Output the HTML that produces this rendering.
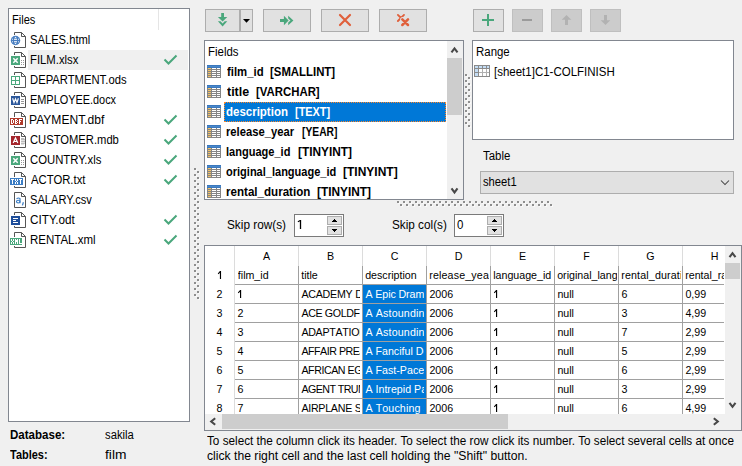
<!DOCTYPE html><html><head><meta charset="utf-8"><title>Import</title><style>

html,body{margin:0;padding:0}
html{overflow:hidden;background:#f0f0f0}
body{width:742px;height:466px;overflow:hidden;background:#f0f0f0;font-family:"Liberation Sans", sans-serif;font-size:12px;color:#000;position:relative}
.a{position:absolute;box-sizing:content-box}
.t{position:absolute;white-space:pre;line-height:1;transform-origin:0 0}
.g{font-size:10.67px}
.k{font-kerning:none}
svg{display:block}

</style></head><body>
<div class="a" style="left:8px;top:8px;width:180px;height:412px;background:#fff;border:1px solid #828790;"></div>
<div class="a" style="left:158px;top:9px;width:1px;height:21px;background:#e5e5e5;"></div>
<span id="t0" class="t" style="left:11.98px;top:13.84px;font-size:12px;transform:scaleX(0.9215);">Files</span>
<div class="a" style="left:28px;top:50px;width:160px;height:20px;background:#f0f0f0;"></div>
<svg class="a" style="left:11px;top:32px;overflow:visible;" width="16" height="16" viewBox="0 0 16 16"><path d="M3.5 3V.5H10.5L14.5 4.5V15.5H3.5V14" fill="none" stroke="#555"/><path d="M10.5 .5V4.5H14.5" fill="none" stroke="#555"/><circle cx="4.5" cy="8.5" r="4.7" fill="#477dc0"/><rect x="3.8" y="4.9" width="1.40" height="1.00" fill="#fff"/><rect x="1.2" y="6.7" width="0.80" height="1.10" fill="#fff"/><rect x="3.0" y="6.7" width="3.00" height="1.10" fill="#fff"/><rect x="7.0" y="6.7" width="0.80" height="1.10" fill="#fff"/><rect x="1.2" y="9.2" width="0.80" height="1.10" fill="#fff"/><rect x="3.0" y="9.2" width="3.00" height="1.10" fill="#fff"/><rect x="7.0" y="9.2" width="0.80" height="1.10" fill="#fff"/><rect x="3.8" y="11.1" width="1.40" height="1.00" fill="#fff"/></svg>
<span id="t1" class="t" style="left:30.03px;top:33.84px;font-size:12px;transform:scaleX(0.9325);">SALES.html</span>
<svg class="a" style="left:11px;top:52px;overflow:visible;" width="16" height="16" viewBox="0 0 16 16"><path d="M3.5 3V.5H10.5L14.5 4.5V15.5H3.5V14" fill="none" stroke="#555"/><path d="M10.5 .5V4.5H14.5" fill="none" stroke="#555"/><rect x="0" y="4" width="9" height="9" fill="#4aa77c"/><path d="M2.3 6.3L6.7 10.7M6.7 6.3L2.3 10.7" stroke="#fff" stroke-width="1.5"/><path d="M10 8h1M12 8h1M10 10h1M12 10h1M10 12h1M12 12h1" stroke="#999" stroke-width="1" transform="translate(0,.5)"/></svg>
<span id="t2" class="t" style="left:29.56px;top:53.84px;font-size:12px;transform:scaleX(0.9433);">FILM.xlsx</span>
<svg class="a" style="left:160px;top:50px;" width="24" height="20" viewBox="0 0 24 20"><path d="M4.5 9.5L8.5 13.5L16.5 5.5" fill="none" stroke="#4aa77c" stroke-width="2"/></svg>
<svg class="a" style="left:11px;top:72px;overflow:visible;" width="16" height="16" viewBox="0 0 16 16"><path d="M3.5 3V.5H10.5L14.5 4.5V15.5H3.5V14" fill="none" stroke="#555"/><path d="M10.5 .5V4.5H14.5" fill="none" stroke="#555"/><rect x=".5" y="4.5" width="8" height="8" fill="#fff" stroke="#4aa77c"/><path d="M4.5 4.5V12.5M.5 8.5H8.5" stroke="#4aa77c"/></svg>
<span id="t3" class="t" style="left:29.56px;top:73.84px;font-size:12px;transform:scaleX(0.9379);">DEPARTMENT.ods</span>
<svg class="a" style="left:11px;top:92px;overflow:visible;" width="16" height="16" viewBox="0 0 16 16"><path d="M3.5 3V.5H10.5L14.5 4.5V15.5H3.5V14" fill="none" stroke="#555"/><path d="M10.5 .5V4.5H14.5" fill="none" stroke="#555"/><rect x="0" y="4" width="9" height="9" fill="#2b579a"/><path d="M1.6 6.3L3 10.6L4.5 6.8L6 10.6L7.4 6.3" fill="none" stroke="#fff" stroke-width="1.2"/><path d="M10 7.5h3M10 9.5h3M10 11.5h3" stroke="#999"/></svg>
<span id="t4" class="t" style="left:29.59px;top:93.84px;font-size:12px;transform:scaleX(0.9089);">EMPLOYEE.docx</span>
<svg class="a" style="left:11px;top:112px;overflow:visible;" width="16" height="16" viewBox="0 0 16 16"><path d="M3.5 5V.5H10.5L14.5 4.5V15.5H3.5V14" fill="none" stroke="#555"/><path d="M10.5 .5V4.5H14.5" fill="none" stroke="#555"/><g shape-rendering="crispEdges"><rect x="-1" y="6" width="13" height="7" fill="#b03a2a"/><rect x="0" y="7" width="1" height="1" fill="#fff"/><rect x="1" y="7" width="1" height="1" fill="#fff"/><rect x="0" y="8" width="1" height="1" fill="#fff"/><rect x="2" y="8" width="1" height="1" fill="#fff"/><rect x="0" y="9" width="1" height="1" fill="#fff"/><rect x="2" y="9" width="1" height="1" fill="#fff"/><rect x="0" y="10" width="1" height="1" fill="#fff"/><rect x="2" y="10" width="1" height="1" fill="#fff"/><rect x="0" y="11" width="1" height="1" fill="#fff"/><rect x="1" y="11" width="1" height="1" fill="#fff"/><rect x="4" y="7" width="1" height="1" fill="#fff"/><rect x="5" y="7" width="1" height="1" fill="#fff"/><rect x="4" y="8" width="1" height="1" fill="#fff"/><rect x="6" y="8" width="1" height="1" fill="#fff"/><rect x="4" y="9" width="1" height="1" fill="#fff"/><rect x="5" y="9" width="1" height="1" fill="#fff"/><rect x="4" y="10" width="1" height="1" fill="#fff"/><rect x="6" y="10" width="1" height="1" fill="#fff"/><rect x="4" y="11" width="1" height="1" fill="#fff"/><rect x="5" y="11" width="1" height="1" fill="#fff"/><rect x="8" y="7" width="1" height="1" fill="#fff"/><rect x="9" y="7" width="1" height="1" fill="#fff"/><rect x="10" y="7" width="1" height="1" fill="#fff"/><rect x="8" y="8" width="1" height="1" fill="#fff"/><rect x="8" y="9" width="1" height="1" fill="#fff"/><rect x="9" y="9" width="1" height="1" fill="#fff"/><rect x="8" y="10" width="1" height="1" fill="#fff"/><rect x="8" y="11" width="1" height="1" fill="#fff"/></g></svg>
<span id="t5" class="t" style="left:29.49px;top:113.84px;font-size:12px;transform:scaleX(1.0054);">PAYMENT.dbf</span>
<svg class="a" style="left:160px;top:110px;" width="24" height="20" viewBox="0 0 24 20"><path d="M4.5 9.5L8.5 13.5L16.5 5.5" fill="none" stroke="#4aa77c" stroke-width="2"/></svg>
<svg class="a" style="left:11px;top:132px;overflow:visible;" width="16" height="16" viewBox="0 0 16 16"><path d="M3.5 3V.5H10.5L14.5 4.5V15.5H3.5V14" fill="none" stroke="#555"/><path d="M10.5 .5V4.5H14.5" fill="none" stroke="#555"/><rect x="0" y="4" width="9" height="9" fill="#a4262c"/><path d="M2.2 11L4.5 6L6.8 11M3 9.5H6" fill="none" stroke="#fff" stroke-width="1.2"/><path d="M10 6h2.5q1.5 .5 1.5 1.5v3q0 1.5 -1.5 2h-2.5z" fill="#bbb"/><path d="M10 8.5h4M10 10.5h4" stroke="#fff" stroke-width=".6"/></svg>
<span id="t6" class="t" style="left:29.92px;top:133.84px;font-size:12px;transform:scaleX(0.9340);">CUSTOMER.mdb</span>
<svg class="a" style="left:160px;top:130px;" width="24" height="20" viewBox="0 0 24 20"><path d="M4.5 9.5L8.5 13.5L16.5 5.5" fill="none" stroke="#4aa77c" stroke-width="2"/></svg>
<svg class="a" style="left:11px;top:152px;overflow:visible;" width="16" height="16" viewBox="0 0 16 16"><path d="M3.5 3V.5H10.5L14.5 4.5V15.5H3.5V14" fill="none" stroke="#555"/><path d="M10.5 .5V4.5H14.5" fill="none" stroke="#555"/><rect x="0" y="4" width="9" height="9" fill="#4aa77c"/><path d="M2.3 6.3L6.7 10.7M6.7 6.3L2.3 10.7" stroke="#fff" stroke-width="1.5"/><path d="M10 8h1M12 8h1M10 10h1M12 10h1M10 12h1M12 12h1" stroke="#999" stroke-width="1" transform="translate(0,.5)"/></svg>
<span id="t7" class="t" style="left:29.91px;top:153.84px;font-size:12px;transform:scaleX(0.9436);">COUNTRY.xls</span>
<svg class="a" style="left:160px;top:150px;" width="24" height="20" viewBox="0 0 24 20"><path d="M4.5 9.5L8.5 13.5L16.5 5.5" fill="none" stroke="#4aa77c" stroke-width="2"/></svg>
<svg class="a" style="left:11px;top:172px;overflow:visible;" width="16" height="16" viewBox="0 0 16 16"><path d="M3.5 5V.5H10.5L14.5 4.5V15.5H3.5V14" fill="none" stroke="#555"/><path d="M10.5 .5V4.5H14.5" fill="none" stroke="#555"/><g shape-rendering="crispEdges"><rect x="-1" y="6" width="13" height="7" fill="#3b7dc4"/><rect x="0" y="7" width="1" height="1" fill="#fff"/><rect x="1" y="7" width="1" height="1" fill="#fff"/><rect x="2" y="7" width="1" height="1" fill="#fff"/><rect x="1" y="8" width="1" height="1" fill="#fff"/><rect x="1" y="9" width="1" height="1" fill="#fff"/><rect x="1" y="10" width="1" height="1" fill="#fff"/><rect x="1" y="11" width="1" height="1" fill="#fff"/><rect x="4" y="7" width="1" height="1" fill="#fff"/><rect x="6" y="7" width="1" height="1" fill="#fff"/><rect x="4" y="8" width="1" height="1" fill="#fff"/><rect x="6" y="8" width="1" height="1" fill="#fff"/><rect x="5" y="9" width="1" height="1" fill="#fff"/><rect x="4" y="10" width="1" height="1" fill="#fff"/><rect x="6" y="10" width="1" height="1" fill="#fff"/><rect x="4" y="11" width="1" height="1" fill="#fff"/><rect x="6" y="11" width="1" height="1" fill="#fff"/><rect x="8" y="7" width="1" height="1" fill="#fff"/><rect x="9" y="7" width="1" height="1" fill="#fff"/><rect x="10" y="7" width="1" height="1" fill="#fff"/><rect x="9" y="8" width="1" height="1" fill="#fff"/><rect x="9" y="9" width="1" height="1" fill="#fff"/><rect x="9" y="10" width="1" height="1" fill="#fff"/><rect x="9" y="11" width="1" height="1" fill="#fff"/></g></svg>
<span id="t8" class="t" style="left:30.50px;top:173.84px;font-size:12px;transform:scaleX(0.9420);">ACTOR.txt</span>
<svg class="a" style="left:160px;top:170px;" width="24" height="20" viewBox="0 0 24 20"><path d="M4.5 9.5L8.5 13.5L16.5 5.5" fill="none" stroke="#4aa77c" stroke-width="2"/></svg>
<svg class="a" style="left:11px;top:192px;overflow:visible;" width="16" height="16" viewBox="0 0 16 16"><path d="M3.5 .5H10.5L14.5 4.5V15.5H3.5Z" fill="#fff" stroke="#555"/><path d="M10.5 .5V4.5H14.5" fill="none" stroke="#555"/><path d="M5.5 6.9Q7.4 5.3 9.0 6.6V11.2" fill="none" stroke="#3b7dc4" stroke-width="1.15"/><ellipse cx="7.2" cy="9.6" rx="1.75" ry="1.35" fill="none" stroke="#3b7dc4" stroke-width="1.1"/><path d="M12.4 10.2L11.4 13.4" fill="none" stroke="#3b7dc4" stroke-width="1.25"/></svg>
<span id="t9" class="t" style="left:30.04px;top:193.84px;font-size:12px;transform:scaleX(0.9250);">SALARY.csv</span>
<svg class="a" style="left:11px;top:212px;overflow:visible;" width="16" height="16" viewBox="0 0 16 16"><path d="M3.5 3V.5H10.5L14.5 4.5V15.5H3.5V14" fill="none" stroke="#555"/><path d="M10.5 .5V4.5H14.5" fill="none" stroke="#555"/><rect x="0" y="4" width="9" height="9" fill="#1f4e9a"/><path d="M2 6.5H7M2 8.5H5M2 10.5H7" stroke="#fff"/></svg>
<span id="t10" class="t" style="left:29.89px;top:213.84px;font-size:12px;transform:scaleX(0.9773);">CITY.odt</span>
<svg class="a" style="left:160px;top:210px;" width="24" height="20" viewBox="0 0 24 20"><path d="M4.5 9.5L8.5 13.5L16.5 5.5" fill="none" stroke="#4aa77c" stroke-width="2"/></svg>
<svg class="a" style="left:11px;top:232px;overflow:visible;" width="16" height="16" viewBox="0 0 16 16"><path d="M3.5 5V.5H10.5L14.5 4.5V15.5H3.5V14" fill="none" stroke="#555"/><path d="M10.5 .5V4.5H14.5" fill="none" stroke="#555"/><g shape-rendering="crispEdges"><rect x="-1" y="6" width="12" height="7" fill="#4aa77c"/><rect x="0" y="7" width="1" height="1" fill="#fff"/><rect x="2" y="7" width="1" height="1" fill="#fff"/><rect x="0" y="8" width="1" height="1" fill="#fff"/><rect x="2" y="8" width="1" height="1" fill="#fff"/><rect x="1" y="9" width="1" height="1" fill="#fff"/><rect x="0" y="10" width="1" height="1" fill="#fff"/><rect x="2" y="10" width="1" height="1" fill="#fff"/><rect x="0" y="11" width="1" height="1" fill="#fff"/><rect x="2" y="11" width="1" height="1" fill="#fff"/><rect x="4" y="7" width="1" height="1" fill="#fff"/><rect x="6" y="7" width="1" height="1" fill="#fff"/><rect x="4" y="8" width="1" height="1" fill="#fff"/><rect x="5" y="8" width="1" height="1" fill="#fff"/><rect x="6" y="8" width="1" height="1" fill="#fff"/><rect x="4" y="9" width="1" height="1" fill="#fff"/><rect x="5" y="9" width="1" height="1" fill="#fff"/><rect x="6" y="9" width="1" height="1" fill="#fff"/><rect x="4" y="10" width="1" height="1" fill="#fff"/><rect x="6" y="10" width="1" height="1" fill="#fff"/><rect x="4" y="11" width="1" height="1" fill="#fff"/><rect x="6" y="11" width="1" height="1" fill="#fff"/><rect x="8" y="7" width="1" height="1" fill="#fff"/><rect x="8" y="8" width="1" height="1" fill="#fff"/><rect x="8" y="9" width="1" height="1" fill="#fff"/><rect x="8" y="10" width="1" height="1" fill="#fff"/><rect x="8" y="11" width="1" height="1" fill="#fff"/><rect x="9" y="11" width="1" height="1" fill="#fff"/><rect x="10" y="11" width="1" height="1" fill="#fff"/></g></svg>
<span id="t11" class="t" style="left:29.54px;top:233.84px;font-size:12px;transform:scaleX(0.9576);">RENTAL.xml</span>
<svg class="a" style="left:160px;top:230px;" width="24" height="20" viewBox="0 0 24 20"><path d="M4.5 9.5L8.5 13.5L16.5 5.5" fill="none" stroke="#4aa77c" stroke-width="2"/></svg>
<span id="t12" class="t" style="left:9.88px;top:428.84px;font-size:12px;font-weight:bold;transform:scaleX(0.9622);">Database:</span>
<span id="t13" class="t" style="left:104.95px;top:428.84px;font-size:12px;transform:scaleX(0.9383);">sakila</span>
<span id="t14" class="t" style="left:10.49px;top:448.84px;font-size:12px;font-weight:bold;transform:scaleX(0.9129);">Tables:</span>
<span id="t15" class="t" style="left:105.16px;top:448.84px;font-size:12px;transform:scaleX(1.1493);">film</span>
<div class="a" style="left:205px;top:9px;width:33px;height:21px;background:#e1e1e1;border:1px solid #adadad;"></div>
<div class="a" style="left:240px;top:9px;width:11px;height:21px;background:#e1e1e1;border:1px solid #adadad;"></div>
<div class="a" style="left:263px;top:9px;width:46px;height:21px;background:#e1e1e1;border:1px solid #adadad;"></div>
<svg class="a" style="left:0;top:0" width="742" height="40" viewBox="0 0 742 40"><path d="M221.20 13.00L224.00 13.00L224.00 16.90L227.30 16.90L222.60 21.60L217.90 16.90L221.20 16.90Z" fill="#4aa77c"/><path d="M217.90 21.20L222.60 26.40L227.30 21.20L224.70 21.20L222.60 23.50L220.50 21.20Z" fill="#4aa77c"/><path d="M280.00 19.10L280.00 21.90L283.90 21.90L283.90 25.20L288.60 20.50L283.90 15.80L283.90 19.10Z" fill="#4aa77c"/><path d="M288.20 15.80L293.40 20.50L288.20 25.20L288.20 22.60L290.50 20.50L288.20 18.40Z" fill="#4aa77c"/></svg>
<svg class="a" style="left:243px;top:19px;" width="7" height="4" viewBox="0 0 7 4"><path d="M0 0H7L3.5 3.8Z" fill="#000"/></svg>
<div class="a" style="left:321px;top:9px;width:46px;height:21px;background:#e1e1e1;border:1px solid #adadad;"></div>
<svg class="a" style="left:338px;top:13px;" width="14" height="14" viewBox="0 0 14 14"><path d="M2 2L12 12M12 2L2 12" stroke="#e0603c" stroke-width="2.2" stroke-linecap="round"/></svg>
<div class="a" style="left:379px;top:9px;width:46px;height:21px;background:#e1e1e1;border:1px solid #adadad;"></div>
<svg class="a" style="left:396px;top:13px;" width="14" height="14" viewBox="0 0 14 14"><path d="M1.9 1.9L8 8M8 1.9L1.9 8" stroke="#e0603c" stroke-width="1.9" stroke-linecap="round"/><path d="M6.3 6.3L12 12M12 6.3L6.3 12" stroke="#e1e1e1" stroke-width="4.2" stroke-linecap="round"/><path d="M6.3 6.3L12 12M12 6.3L6.3 12" stroke="#e0603c" stroke-width="2.5" stroke-linecap="round"/></svg>
<div class="a" style="left:473px;top:9px;width:29px;height:21px;background:#e1e1e1;border:1px solid #adadad;"></div>
<svg class="a" style="left:482px;top:14px;" width="12" height="12" viewBox="0 0 12 12" shape-rendering="crispEdges"><path d="M0 6H12M6 0V12" stroke="#4aa77c" stroke-width="2"/></svg>
<div class="a" style="left:512px;top:9px;width:29px;height:21px;background:#cccccc;border:1px solid #bfbfbf;"></div>
<div class="a" style="left:522px;top:19px;width:10px;height:2px;background:#9b9b9b;"></div>
<div class="a" style="left:551px;top:9px;width:29px;height:21px;background:#cccccc;border:1px solid #bfbfbf;"></div>
<svg class="a" style="left:561px;top:14px;" width="12" height="12" viewBox="0 0 12 12"><path d="M5.5 1L10.3 5.8H7V11H4V5.8H.7Z" fill="#b2b2b2"/></svg>
<div class="a" style="left:590px;top:9px;width:29px;height:21px;background:#cccccc;border:1px solid #bfbfbf;"></div>
<svg class="a" style="left:600px;top:14px;" width="12" height="12" viewBox="0 0 12 12"><path d="M5.5 11L10.3 6.2H7V1H4V6.2H.7Z" fill="#b2b2b2"/></svg>
<div class="a" style="left:204px;top:40px;width:258px;height:158px;background:#fff;border:1px solid #828790;overflow:hidden"></div>
<span id="t16" class="t" style="left:207.65px;top:45.84px;font-size:12px;transform:scaleX(0.9535);">Fields</span>
<div class="a" style="left:205px;top:41px;width:258px;height:158px;overflow:hidden">
</div>
<svg class="a" style="left:207px;top:65px;" width="14" height="13" viewBox="0 0 14 13" shape-rendering="crispEdges"><rect x="0" y="0" width="14" height="13" fill="#858585"/><rect x="0" y="0" width="14" height="3" fill="#3b78bd"/><rect x="0" y="1" width="14" height="1" fill="#4a86c8"/><rect x="1" y="3" width="3" height="1" fill="#f5c264"/><rect x="5" y="3" width="4" height="1" fill="#fff"/><rect x="10" y="3" width="3" height="1" fill="#fff"/><rect x="1" y="5" width="3" height="1" fill="#f5c264"/><rect x="5" y="5" width="4" height="1" fill="#fff"/><rect x="10" y="5" width="3" height="1" fill="#fff"/><rect x="1" y="7" width="3" height="1" fill="#f5c264"/><rect x="5" y="7" width="4" height="1" fill="#fff"/><rect x="10" y="7" width="3" height="1" fill="#fff"/><rect x="1" y="9" width="3" height="1" fill="#f5c264"/><rect x="5" y="9" width="4" height="1" fill="#fff"/><rect x="10" y="9" width="3" height="1" fill="#fff"/><rect x="1" y="11" width="3" height="1" fill="#f5c264"/><rect x="5" y="11" width="4" height="1" fill="#fff"/><rect x="10" y="11" width="3" height="1" fill="#fff"/></svg>
<span id="t17" class="t" style="left:226.78px;top:65.84px;font-size:12px;font-weight:bold;transform:scaleX(0.9457);">film_id</span>
<span id="t18" class="t" style="left:269.61px;top:65.84px;font-size:12px;font-weight:bold;transform:scaleX(0.9484);">[SMALLINT]</span>
<svg class="a" style="left:207px;top:85px;" width="14" height="13" viewBox="0 0 14 13" shape-rendering="crispEdges"><rect x="0" y="0" width="14" height="13" fill="#858585"/><rect x="0" y="0" width="14" height="3" fill="#3b78bd"/><rect x="0" y="1" width="14" height="1" fill="#4a86c8"/><rect x="1" y="3" width="3" height="1" fill="#f5c264"/><rect x="5" y="3" width="4" height="1" fill="#fff"/><rect x="10" y="3" width="3" height="1" fill="#fff"/><rect x="1" y="5" width="3" height="1" fill="#f5c264"/><rect x="5" y="5" width="4" height="1" fill="#fff"/><rect x="10" y="5" width="3" height="1" fill="#fff"/><rect x="1" y="7" width="3" height="1" fill="#f5c264"/><rect x="5" y="7" width="4" height="1" fill="#fff"/><rect x="10" y="7" width="3" height="1" fill="#fff"/><rect x="1" y="9" width="3" height="1" fill="#f5c264"/><rect x="5" y="9" width="4" height="1" fill="#fff"/><rect x="10" y="9" width="3" height="1" fill="#fff"/><rect x="1" y="11" width="3" height="1" fill="#f5c264"/><rect x="5" y="11" width="4" height="1" fill="#fff"/><rect x="10" y="11" width="3" height="1" fill="#fff"/></svg>
<span id="t19" class="t" style="left:226.77px;top:85.84px;font-size:12px;font-weight:bold;transform:scaleX(1.0395);">title</span>
<span id="t20" class="t" style="left:255.61px;top:85.84px;font-size:12px;font-weight:bold;transform:scaleX(0.9488);">[VARCHAR]</span>
<div class="a" style="left:224px;top:102px;width:220px;height:18px;background:#0078d7;border:1px dotted #ff8728"></div>
<svg class="a" style="left:207px;top:105px;" width="14" height="13" viewBox="0 0 14 13" shape-rendering="crispEdges"><rect x="0" y="0" width="14" height="13" fill="#858585"/><rect x="0" y="0" width="14" height="3" fill="#3b78bd"/><rect x="0" y="1" width="14" height="1" fill="#4a86c8"/><rect x="1" y="3" width="3" height="1" fill="#f5c264"/><rect x="5" y="3" width="4" height="1" fill="#fff"/><rect x="10" y="3" width="3" height="1" fill="#fff"/><rect x="1" y="5" width="3" height="1" fill="#f5c264"/><rect x="5" y="5" width="4" height="1" fill="#fff"/><rect x="10" y="5" width="3" height="1" fill="#fff"/><rect x="1" y="7" width="3" height="1" fill="#f5c264"/><rect x="5" y="7" width="4" height="1" fill="#fff"/><rect x="10" y="7" width="3" height="1" fill="#fff"/><rect x="1" y="9" width="3" height="1" fill="#f5c264"/><rect x="5" y="9" width="4" height="1" fill="#fff"/><rect x="10" y="9" width="3" height="1" fill="#fff"/><rect x="1" y="11" width="3" height="1" fill="#f5c264"/><rect x="5" y="11" width="4" height="1" fill="#fff"/><rect x="10" y="11" width="3" height="1" fill="#fff"/></svg>
<span id="t21" class="t" style="left:226.42px;top:105.84px;font-size:12px;font-weight:bold;color:#fff;transform:scaleX(0.9575);">description</span>
<span id="t22" class="t" style="left:294.63px;top:105.84px;font-size:12px;font-weight:bold;color:#fff;transform:scaleX(0.9097);">[TEXT]</span>
<svg class="a" style="left:207px;top:125px;" width="14" height="13" viewBox="0 0 14 13" shape-rendering="crispEdges"><rect x="0" y="0" width="14" height="13" fill="#858585"/><rect x="0" y="0" width="14" height="3" fill="#3b78bd"/><rect x="0" y="1" width="14" height="1" fill="#4a86c8"/><rect x="1" y="3" width="3" height="1" fill="#f5c264"/><rect x="5" y="3" width="4" height="1" fill="#fff"/><rect x="10" y="3" width="3" height="1" fill="#fff"/><rect x="1" y="5" width="3" height="1" fill="#f5c264"/><rect x="5" y="5" width="4" height="1" fill="#fff"/><rect x="10" y="5" width="3" height="1" fill="#fff"/><rect x="1" y="7" width="3" height="1" fill="#f5c264"/><rect x="5" y="7" width="4" height="1" fill="#fff"/><rect x="10" y="7" width="3" height="1" fill="#fff"/><rect x="1" y="9" width="3" height="1" fill="#f5c264"/><rect x="5" y="9" width="4" height="1" fill="#fff"/><rect x="10" y="9" width="3" height="1" fill="#fff"/><rect x="1" y="11" width="3" height="1" fill="#f5c264"/><rect x="5" y="11" width="4" height="1" fill="#fff"/><rect x="10" y="11" width="3" height="1" fill="#fff"/></svg>
<span id="t23" class="t" style="left:226.20px;top:125.84px;font-size:12px;font-weight:bold;transform:scaleX(0.9350);">release_year</span>
<span id="t24" class="t" style="left:301.56px;top:125.84px;font-size:12px;font-weight:bold;transform:scaleX(0.8573);">[YEAR]</span>
<svg class="a" style="left:207px;top:145px;" width="14" height="13" viewBox="0 0 14 13" shape-rendering="crispEdges"><rect x="0" y="0" width="14" height="13" fill="#858585"/><rect x="0" y="0" width="14" height="3" fill="#3b78bd"/><rect x="0" y="1" width="14" height="1" fill="#4a86c8"/><rect x="1" y="3" width="3" height="1" fill="#f5c264"/><rect x="5" y="3" width="4" height="1" fill="#fff"/><rect x="10" y="3" width="3" height="1" fill="#fff"/><rect x="1" y="5" width="3" height="1" fill="#f5c264"/><rect x="5" y="5" width="4" height="1" fill="#fff"/><rect x="10" y="5" width="3" height="1" fill="#fff"/><rect x="1" y="7" width="3" height="1" fill="#f5c264"/><rect x="5" y="7" width="4" height="1" fill="#fff"/><rect x="10" y="7" width="3" height="1" fill="#fff"/><rect x="1" y="9" width="3" height="1" fill="#f5c264"/><rect x="5" y="9" width="4" height="1" fill="#fff"/><rect x="10" y="9" width="3" height="1" fill="#fff"/><rect x="1" y="11" width="3" height="1" fill="#f5c264"/><rect x="5" y="11" width="4" height="1" fill="#fff"/><rect x="10" y="11" width="3" height="1" fill="#fff"/></svg>
<span id="t25" class="t" style="left:226.21px;top:145.84px;font-size:12px;font-weight:bold;transform:scaleX(0.9197);">language_id</span>
<span id="t26" class="t" style="left:297.78px;top:145.84px;font-size:12px;font-weight:bold;transform:scaleX(0.9874);">[TINYINT]</span>
<svg class="a" style="left:207px;top:165px;" width="14" height="13" viewBox="0 0 14 13" shape-rendering="crispEdges"><rect x="0" y="0" width="14" height="13" fill="#858585"/><rect x="0" y="0" width="14" height="3" fill="#3b78bd"/><rect x="0" y="1" width="14" height="1" fill="#4a86c8"/><rect x="1" y="3" width="3" height="1" fill="#f5c264"/><rect x="5" y="3" width="4" height="1" fill="#fff"/><rect x="10" y="3" width="3" height="1" fill="#fff"/><rect x="1" y="5" width="3" height="1" fill="#f5c264"/><rect x="5" y="5" width="4" height="1" fill="#fff"/><rect x="10" y="5" width="3" height="1" fill="#fff"/><rect x="1" y="7" width="3" height="1" fill="#f5c264"/><rect x="5" y="7" width="4" height="1" fill="#fff"/><rect x="10" y="7" width="3" height="1" fill="#fff"/><rect x="1" y="9" width="3" height="1" fill="#f5c264"/><rect x="5" y="9" width="4" height="1" fill="#fff"/><rect x="10" y="9" width="3" height="1" fill="#fff"/><rect x="1" y="11" width="3" height="1" fill="#f5c264"/><rect x="5" y="11" width="4" height="1" fill="#fff"/><rect x="10" y="11" width="3" height="1" fill="#fff"/></svg>
<span id="t27" class="t" style="left:226.44px;top:165.84px;font-size:12px;font-weight:bold;transform:scaleX(0.9187);">original_language_id</span>
<span id="t28" class="t" style="left:343.17px;top:165.84px;font-size:12px;font-weight:bold;transform:scaleX(1.0005);">[TINYINT]</span>
<svg class="a" style="left:207px;top:185px;" width="14" height="13" viewBox="0 0 14 13" shape-rendering="crispEdges"><rect x="0" y="0" width="14" height="13" fill="#858585"/><rect x="0" y="0" width="14" height="3" fill="#3b78bd"/><rect x="0" y="1" width="14" height="1" fill="#4a86c8"/><rect x="1" y="3" width="3" height="1" fill="#f5c264"/><rect x="5" y="3" width="4" height="1" fill="#fff"/><rect x="10" y="3" width="3" height="1" fill="#fff"/><rect x="1" y="5" width="3" height="1" fill="#f5c264"/><rect x="5" y="5" width="4" height="1" fill="#fff"/><rect x="10" y="5" width="3" height="1" fill="#fff"/><rect x="1" y="7" width="3" height="1" fill="#f5c264"/><rect x="5" y="7" width="4" height="1" fill="#fff"/><rect x="10" y="7" width="3" height="1" fill="#fff"/><rect x="1" y="9" width="3" height="1" fill="#f5c264"/><rect x="5" y="9" width="4" height="1" fill="#fff"/><rect x="10" y="9" width="3" height="1" fill="#fff"/><rect x="1" y="11" width="3" height="1" fill="#f5c264"/><rect x="5" y="11" width="4" height="1" fill="#fff"/><rect x="10" y="11" width="3" height="1" fill="#fff"/></svg>
<span id="t29" class="t" style="left:226.18px;top:185.84px;font-size:12px;font-weight:bold;transform:scaleX(0.9654);">rental_duration</span>
<span id="t30" class="t" style="left:317.18px;top:185.84px;font-size:12px;font-weight:bold;transform:scaleX(0.9874);">[TINYINT]</span>
<div class="a" style="left:205px;top:199px;width:258px;height:1px;"></div>
<div class="a" style="left:447px;top:41px;width:16px;height:158px;background:#f0f0f0;"></div>
<div class="a" style="left:447px;top:58px;width:15px;height:57px;background:#cdcdcd;"></div>
<svg class="a" style="left:0;top:0" width="742" height="466"><path d="M451.50 52.40L454.50 48.40L457.50 52.40" fill="none" stroke="#484848" stroke-width="2.1" stroke-linejoin="miter"/></svg>
<svg class="a" style="left:0;top:0" width="742" height="466"><path d="M451.50 188.40L454.50 192.40L457.50 188.40" fill="none" stroke="#484848" stroke-width="2.1" stroke-linejoin="miter"/></svg>
<svg class="a" style="left:0;top:0" width="742" height="466" shape-rendering="crispEdges"><rect x="466" y="75" width="2" height="2" fill="#fafafa"/><rect x="469" y="78" width="2" height="2" fill="#fafafa"/><rect x="466" y="81" width="2" height="2" fill="#fafafa"/><rect x="469" y="84" width="2" height="2" fill="#fafafa"/><rect x="466" y="87" width="2" height="2" fill="#fafafa"/><rect x="469" y="90" width="2" height="2" fill="#fafafa"/><rect x="466" y="93" width="2" height="2" fill="#fafafa"/><rect x="469" y="96" width="2" height="2" fill="#fafafa"/><rect x="466" y="99" width="2" height="2" fill="#fafafa"/><rect x="469" y="102" width="2" height="2" fill="#fafafa"/><rect x="466" y="105" width="2" height="2" fill="#fafafa"/><rect x="469" y="108" width="2" height="2" fill="#fafafa"/><rect x="466" y="111" width="2" height="2" fill="#fafafa"/><rect x="469" y="114" width="2" height="2" fill="#fafafa"/><rect x="466" y="117" width="2" height="2" fill="#fafafa"/><rect x="469" y="120" width="2" height="2" fill="#fafafa"/><rect x="466" y="123" width="2" height="2" fill="#fafafa"/><rect x="469" y="126" width="2" height="2" fill="#fafafa"/><rect x="195" y="169" width="2" height="2" fill="#fafafa"/><rect x="198" y="172" width="2" height="2" fill="#fafafa"/><rect x="195" y="175" width="2" height="2" fill="#fafafa"/><rect x="198" y="178" width="2" height="2" fill="#fafafa"/><rect x="195" y="181" width="2" height="2" fill="#fafafa"/><rect x="198" y="184" width="2" height="2" fill="#fafafa"/><rect x="195" y="187" width="2" height="2" fill="#fafafa"/><rect x="198" y="190" width="2" height="2" fill="#fafafa"/><rect x="195" y="193" width="2" height="2" fill="#fafafa"/><rect x="198" y="196" width="2" height="2" fill="#fafafa"/><rect x="195" y="199" width="2" height="2" fill="#fafafa"/><rect x="198" y="202" width="2" height="2" fill="#fafafa"/><rect x="195" y="205" width="2" height="2" fill="#fafafa"/><rect x="198" y="208" width="2" height="2" fill="#fafafa"/><rect x="195" y="211" width="2" height="2" fill="#fafafa"/><rect x="198" y="214" width="2" height="2" fill="#fafafa"/><rect x="195" y="217" width="2" height="2" fill="#fafafa"/><rect x="198" y="220" width="2" height="2" fill="#fafafa"/><rect x="195" y="223" width="2" height="2" fill="#fafafa"/><rect x="198" y="226" width="2" height="2" fill="#fafafa"/><rect x="195" y="229" width="2" height="2" fill="#fafafa"/><rect x="198" y="232" width="2" height="2" fill="#fafafa"/><rect x="195" y="235" width="2" height="2" fill="#fafafa"/><rect x="198" y="238" width="2" height="2" fill="#fafafa"/><rect x="195" y="241" width="2" height="2" fill="#fafafa"/><rect x="198" y="244" width="2" height="2" fill="#fafafa"/><rect x="195" y="247" width="2" height="2" fill="#fafafa"/><rect x="198" y="250" width="2" height="2" fill="#fafafa"/><rect x="195" y="253" width="2" height="2" fill="#fafafa"/><rect x="198" y="256" width="2" height="2" fill="#fafafa"/><rect x="195" y="259" width="2" height="2" fill="#fafafa"/><rect x="198" y="262" width="2" height="2" fill="#fafafa"/><rect x="195" y="265" width="2" height="2" fill="#fafafa"/><rect x="198" y="268" width="2" height="2" fill="#fafafa"/><rect x="195" y="271" width="2" height="2" fill="#fafafa"/><rect x="198" y="274" width="2" height="2" fill="#fafafa"/><rect x="195" y="277" width="2" height="2" fill="#fafafa"/><rect x="198" y="280" width="2" height="2" fill="#fafafa"/><rect x="195" y="283" width="2" height="2" fill="#fafafa"/><rect x="198" y="286" width="2" height="2" fill="#fafafa"/><rect x="195" y="289" width="2" height="2" fill="#fafafa"/><rect x="198" y="292" width="2" height="2" fill="#fafafa"/><rect x="195" y="295" width="2" height="2" fill="#fafafa"/><rect x="198" y="298" width="2" height="2" fill="#fafafa"/><rect x="398" y="202" width="2" height="2" fill="#fafafa"/><rect x="401" y="205" width="2" height="2" fill="#fafafa"/><rect x="404" y="202" width="2" height="2" fill="#fafafa"/><rect x="407" y="205" width="2" height="2" fill="#fafafa"/><rect x="410" y="202" width="2" height="2" fill="#fafafa"/><rect x="413" y="205" width="2" height="2" fill="#fafafa"/><rect x="416" y="202" width="2" height="2" fill="#fafafa"/><rect x="419" y="205" width="2" height="2" fill="#fafafa"/><rect x="422" y="202" width="2" height="2" fill="#fafafa"/><rect x="425" y="205" width="2" height="2" fill="#fafafa"/><rect x="428" y="202" width="2" height="2" fill="#fafafa"/><rect x="431" y="205" width="2" height="2" fill="#fafafa"/><rect x="434" y="202" width="2" height="2" fill="#fafafa"/><rect x="437" y="205" width="2" height="2" fill="#fafafa"/><rect x="440" y="202" width="2" height="2" fill="#fafafa"/><rect x="443" y="205" width="2" height="2" fill="#fafafa"/><rect x="446" y="202" width="2" height="2" fill="#fafafa"/><rect x="449" y="205" width="2" height="2" fill="#fafafa"/><rect x="452" y="202" width="2" height="2" fill="#fafafa"/><rect x="455" y="205" width="2" height="2" fill="#fafafa"/><rect x="458" y="202" width="2" height="2" fill="#fafafa"/><rect x="461" y="205" width="2" height="2" fill="#fafafa"/><rect x="464" y="202" width="2" height="2" fill="#fafafa"/><rect x="467" y="205" width="2" height="2" fill="#fafafa"/><rect x="470" y="202" width="2" height="2" fill="#fafafa"/><rect x="473" y="205" width="2" height="2" fill="#fafafa"/><rect x="476" y="202" width="2" height="2" fill="#fafafa"/><rect x="479" y="205" width="2" height="2" fill="#fafafa"/><rect x="482" y="202" width="2" height="2" fill="#fafafa"/><rect x="485" y="205" width="2" height="2" fill="#fafafa"/><rect x="488" y="202" width="2" height="2" fill="#fafafa"/><rect x="491" y="205" width="2" height="2" fill="#fafafa"/><rect x="494" y="202" width="2" height="2" fill="#fafafa"/><rect x="497" y="205" width="2" height="2" fill="#fafafa"/><rect x="500" y="202" width="2" height="2" fill="#fafafa"/><rect x="503" y="205" width="2" height="2" fill="#fafafa"/><rect x="506" y="202" width="2" height="2" fill="#fafafa"/><rect x="509" y="205" width="2" height="2" fill="#fafafa"/><rect x="512" y="202" width="2" height="2" fill="#fafafa"/><rect x="515" y="205" width="2" height="2" fill="#fafafa"/><rect x="518" y="202" width="2" height="2" fill="#fafafa"/><rect x="521" y="205" width="2" height="2" fill="#fafafa"/><rect x="524" y="202" width="2" height="2" fill="#fafafa"/><rect x="527" y="205" width="2" height="2" fill="#fafafa"/><rect x="530" y="202" width="2" height="2" fill="#fafafa"/><rect x="533" y="205" width="2" height="2" fill="#fafafa"/><rect x="536" y="202" width="2" height="2" fill="#fafafa"/><rect x="539" y="205" width="2" height="2" fill="#fafafa"/><rect x="542" y="202" width="2" height="2" fill="#fafafa"/><rect x="545" y="205" width="2" height="2" fill="#fafafa"/><rect x="548" y="202" width="2" height="2" fill="#fafafa"/><rect x="551" y="205" width="2" height="2" fill="#fafafa"/><rect x="465" y="74" width="2" height="2" fill="#8e8e8e"/><rect x="468" y="77" width="2" height="2" fill="#8e8e8e"/><rect x="465" y="80" width="2" height="2" fill="#8e8e8e"/><rect x="468" y="83" width="2" height="2" fill="#8e8e8e"/><rect x="465" y="86" width="2" height="2" fill="#8e8e8e"/><rect x="468" y="89" width="2" height="2" fill="#8e8e8e"/><rect x="465" y="92" width="2" height="2" fill="#8e8e8e"/><rect x="468" y="95" width="2" height="2" fill="#8e8e8e"/><rect x="465" y="98" width="2" height="2" fill="#8e8e8e"/><rect x="468" y="101" width="2" height="2" fill="#8e8e8e"/><rect x="465" y="104" width="2" height="2" fill="#8e8e8e"/><rect x="468" y="107" width="2" height="2" fill="#8e8e8e"/><rect x="465" y="110" width="2" height="2" fill="#8e8e8e"/><rect x="468" y="113" width="2" height="2" fill="#8e8e8e"/><rect x="465" y="116" width="2" height="2" fill="#8e8e8e"/><rect x="468" y="119" width="2" height="2" fill="#8e8e8e"/><rect x="465" y="122" width="2" height="2" fill="#8e8e8e"/><rect x="468" y="125" width="2" height="2" fill="#8e8e8e"/><rect x="194" y="168" width="2" height="2" fill="#8e8e8e"/><rect x="197" y="171" width="2" height="2" fill="#8e8e8e"/><rect x="194" y="174" width="2" height="2" fill="#8e8e8e"/><rect x="197" y="177" width="2" height="2" fill="#8e8e8e"/><rect x="194" y="180" width="2" height="2" fill="#8e8e8e"/><rect x="197" y="183" width="2" height="2" fill="#8e8e8e"/><rect x="194" y="186" width="2" height="2" fill="#8e8e8e"/><rect x="197" y="189" width="2" height="2" fill="#8e8e8e"/><rect x="194" y="192" width="2" height="2" fill="#8e8e8e"/><rect x="197" y="195" width="2" height="2" fill="#8e8e8e"/><rect x="194" y="198" width="2" height="2" fill="#8e8e8e"/><rect x="197" y="201" width="2" height="2" fill="#8e8e8e"/><rect x="194" y="204" width="2" height="2" fill="#8e8e8e"/><rect x="197" y="207" width="2" height="2" fill="#8e8e8e"/><rect x="194" y="210" width="2" height="2" fill="#8e8e8e"/><rect x="197" y="213" width="2" height="2" fill="#8e8e8e"/><rect x="194" y="216" width="2" height="2" fill="#8e8e8e"/><rect x="197" y="219" width="2" height="2" fill="#8e8e8e"/><rect x="194" y="222" width="2" height="2" fill="#8e8e8e"/><rect x="197" y="225" width="2" height="2" fill="#8e8e8e"/><rect x="194" y="228" width="2" height="2" fill="#8e8e8e"/><rect x="197" y="231" width="2" height="2" fill="#8e8e8e"/><rect x="194" y="234" width="2" height="2" fill="#8e8e8e"/><rect x="197" y="237" width="2" height="2" fill="#8e8e8e"/><rect x="194" y="240" width="2" height="2" fill="#8e8e8e"/><rect x="197" y="243" width="2" height="2" fill="#8e8e8e"/><rect x="194" y="246" width="2" height="2" fill="#8e8e8e"/><rect x="197" y="249" width="2" height="2" fill="#8e8e8e"/><rect x="194" y="252" width="2" height="2" fill="#8e8e8e"/><rect x="197" y="255" width="2" height="2" fill="#8e8e8e"/><rect x="194" y="258" width="2" height="2" fill="#8e8e8e"/><rect x="197" y="261" width="2" height="2" fill="#8e8e8e"/><rect x="194" y="264" width="2" height="2" fill="#8e8e8e"/><rect x="197" y="267" width="2" height="2" fill="#8e8e8e"/><rect x="194" y="270" width="2" height="2" fill="#8e8e8e"/><rect x="197" y="273" width="2" height="2" fill="#8e8e8e"/><rect x="194" y="276" width="2" height="2" fill="#8e8e8e"/><rect x="197" y="279" width="2" height="2" fill="#8e8e8e"/><rect x="194" y="282" width="2" height="2" fill="#8e8e8e"/><rect x="197" y="285" width="2" height="2" fill="#8e8e8e"/><rect x="194" y="288" width="2" height="2" fill="#8e8e8e"/><rect x="197" y="291" width="2" height="2" fill="#8e8e8e"/><rect x="194" y="294" width="2" height="2" fill="#8e8e8e"/><rect x="197" y="297" width="2" height="2" fill="#8e8e8e"/><rect x="397" y="201" width="2" height="2" fill="#8e8e8e"/><rect x="400" y="204" width="2" height="2" fill="#8e8e8e"/><rect x="403" y="201" width="2" height="2" fill="#8e8e8e"/><rect x="406" y="204" width="2" height="2" fill="#8e8e8e"/><rect x="409" y="201" width="2" height="2" fill="#8e8e8e"/><rect x="412" y="204" width="2" height="2" fill="#8e8e8e"/><rect x="415" y="201" width="2" height="2" fill="#8e8e8e"/><rect x="418" y="204" width="2" height="2" fill="#8e8e8e"/><rect x="421" y="201" width="2" height="2" fill="#8e8e8e"/><rect x="424" y="204" width="2" height="2" fill="#8e8e8e"/><rect x="427" y="201" width="2" height="2" fill="#8e8e8e"/><rect x="430" y="204" width="2" height="2" fill="#8e8e8e"/><rect x="433" y="201" width="2" height="2" fill="#8e8e8e"/><rect x="436" y="204" width="2" height="2" fill="#8e8e8e"/><rect x="439" y="201" width="2" height="2" fill="#8e8e8e"/><rect x="442" y="204" width="2" height="2" fill="#8e8e8e"/><rect x="445" y="201" width="2" height="2" fill="#8e8e8e"/><rect x="448" y="204" width="2" height="2" fill="#8e8e8e"/><rect x="451" y="201" width="2" height="2" fill="#8e8e8e"/><rect x="454" y="204" width="2" height="2" fill="#8e8e8e"/><rect x="457" y="201" width="2" height="2" fill="#8e8e8e"/><rect x="460" y="204" width="2" height="2" fill="#8e8e8e"/><rect x="463" y="201" width="2" height="2" fill="#8e8e8e"/><rect x="466" y="204" width="2" height="2" fill="#8e8e8e"/><rect x="469" y="201" width="2" height="2" fill="#8e8e8e"/><rect x="472" y="204" width="2" height="2" fill="#8e8e8e"/><rect x="475" y="201" width="2" height="2" fill="#8e8e8e"/><rect x="478" y="204" width="2" height="2" fill="#8e8e8e"/><rect x="481" y="201" width="2" height="2" fill="#8e8e8e"/><rect x="484" y="204" width="2" height="2" fill="#8e8e8e"/><rect x="487" y="201" width="2" height="2" fill="#8e8e8e"/><rect x="490" y="204" width="2" height="2" fill="#8e8e8e"/><rect x="493" y="201" width="2" height="2" fill="#8e8e8e"/><rect x="496" y="204" width="2" height="2" fill="#8e8e8e"/><rect x="499" y="201" width="2" height="2" fill="#8e8e8e"/><rect x="502" y="204" width="2" height="2" fill="#8e8e8e"/><rect x="505" y="201" width="2" height="2" fill="#8e8e8e"/><rect x="508" y="204" width="2" height="2" fill="#8e8e8e"/><rect x="511" y="201" width="2" height="2" fill="#8e8e8e"/><rect x="514" y="204" width="2" height="2" fill="#8e8e8e"/><rect x="517" y="201" width="2" height="2" fill="#8e8e8e"/><rect x="520" y="204" width="2" height="2" fill="#8e8e8e"/><rect x="523" y="201" width="2" height="2" fill="#8e8e8e"/><rect x="526" y="204" width="2" height="2" fill="#8e8e8e"/><rect x="529" y="201" width="2" height="2" fill="#8e8e8e"/><rect x="532" y="204" width="2" height="2" fill="#8e8e8e"/><rect x="535" y="201" width="2" height="2" fill="#8e8e8e"/><rect x="538" y="204" width="2" height="2" fill="#8e8e8e"/><rect x="541" y="201" width="2" height="2" fill="#8e8e8e"/><rect x="544" y="204" width="2" height="2" fill="#8e8e8e"/><rect x="547" y="201" width="2" height="2" fill="#8e8e8e"/><rect x="550" y="204" width="2" height="2" fill="#8e8e8e"/></svg>
<div class="a" style="left:472px;top:40px;width:260px;height:98px;background:#fff;border:1px solid #828790;"></div>
<span id="t31" class="t" style="left:475.55px;top:45.84px;font-size:12px;transform:scaleX(0.9535);">Range</span>
<svg class="a" style="left:474px;top:65px;" width="16" height="12" viewBox="0 0 16 12" shape-rendering="crispEdges"><rect x="0" y="0" width="16" height="12" fill="#8a8a8a"/><rect x="1" y="1" width="3" height="2" fill="#c3dcf4"/><rect x="1" y="4" width="3" height="3" fill="#c3dcf4"/><rect x="1" y="8" width="3" height="3" fill="#c3dcf4"/><rect x="5" y="1" width="3" height="2" fill="#c3dcf4"/><rect x="5" y="4" width="3" height="3" fill="#fff"/><rect x="5" y="8" width="3" height="3" fill="#fff"/><rect x="9" y="1" width="3" height="2" fill="#c3dcf4"/><rect x="9" y="4" width="3" height="3" fill="#fff"/><rect x="9" y="8" width="3" height="3" fill="#fff"/><rect x="13" y="1" width="2" height="2" fill="#c3dcf4"/><rect x="13" y="4" width="2" height="3" fill="#fff"/><rect x="13" y="8" width="2" height="3" fill="#fff"/><rect x="8" y="4" width="1" height="7" fill="#b0b0b0"/><rect x="12" y="4" width="1" height="7" fill="#b0b0b0"/><rect x="5" y="7" width="10" height="1" fill="#b0b0b0"/></svg>
<span id="t32" class="t" style="left:493.56px;top:65.84px;font-size:12px;transform:scaleX(0.9577);">[sheet1]C1-COLFINISH</span>
<span id="t33" class="t" style="left:482.56px;top:149.84px;font-size:12px;transform:scaleX(0.9507);">Table</span>
<div class="a" style="left:480px;top:171px;width:252px;height:21px;background:#e1e1e1;border:1px solid #adadad;"></div>
<span id="t34" class="t" style="left:482.85px;top:175.84px;font-size:12px;transform:scaleX(0.9338);">sheet1</span>
<svg class="a" style="left:719px;top:178px;" width="12" height="9" viewBox="0 0 12 9"><path d="M2 2.5L6 6.5L10 2.5" fill="none" stroke="#404040" stroke-width="1.05"/></svg>
<span id="t35" class="t" style="left:227.41px;top:218.84px;font-size:12px;transform:scaleX(0.9838);">Skip row(s)</span>
<div class="a" style="left:294px;top:214px;width:48px;height:21px;background:#fff;border:1px solid #7a7a7a;"></div>
<svg class="a" style="left:0;top:0" width="742" height="466"><rect x="299.85" y="220" width="1.3" height="9" fill="#000"/><path d="M297.9 221.7L300.3 220.5" stroke="#000" stroke-width="1.15" fill="none"/></svg>
<div class="a" style="left:327px;top:216px;width:13px;height:7px;background:#e1e1e1;border:1px solid #adadad;"></div>
<div class="a" style="left:327px;top:226px;width:13px;height:7px;background:#e1e1e1;border:1px solid #adadad;"></div>
<svg class="a" style="left:332px;top:219px;" width="5" height="3" viewBox="0 0 5 3" shape-rendering="crispEdges"><path d="M2 0h1v1h-1zM1 1h3v1h-3zM0 2h5v1h-5z" fill="#000"/></svg>
<svg class="a" style="left:332px;top:229px;" width="5" height="3" viewBox="0 0 5 3" shape-rendering="crispEdges"><path d="M0 0h5v1h-5zM1 1h3v1h-3zM2 2h1v1h-1z" fill="#000"/></svg>
<span id="t36" class="t" style="left:391.71px;top:218.84px;font-size:12px;transform:scaleX(0.9790);">Skip col(s)</span>
<div class="a" style="left:454px;top:214px;width:48px;height:21px;background:#fff;border:1px solid #7a7a7a;"></div>
<span id="t37" class="t" style="left:456.92px;top:218.84px;font-size:12px;transform:scaleX(0.9565);">0</span>
<div class="a" style="left:487px;top:216px;width:13px;height:7px;background:#e1e1e1;border:1px solid #adadad;"></div>
<div class="a" style="left:487px;top:226px;width:13px;height:7px;background:#e1e1e1;border:1px solid #adadad;"></div>
<svg class="a" style="left:492px;top:219px;" width="5" height="3" viewBox="0 0 5 3" shape-rendering="crispEdges"><path d="M2 0h1v1h-1zM1 1h3v1h-3zM0 2h5v1h-5z" fill="#000"/></svg>
<svg class="a" style="left:492px;top:229px;" width="5" height="3" viewBox="0 0 5 3" shape-rendering="crispEdges"><path d="M0 0h5v1h-5zM1 1h3v1h-3zM2 2h1v1h-1z" fill="#000"/></svg>
<div class="a" style="left:204px;top:245px;width:536px;height:184px;background:#fff;border:1px solid #828790"></div>
<div class="a" style="left:234px;top:246px;width:1px;height:168px;background:#dcdcdc;"></div>
<div class="a" style="left:298px;top:246px;width:1px;height:20px;background:#dcdcdc;"></div>
<div class="a" style="left:298px;top:266px;width:1px;height:148px;background:#a0a0a0;"></div>
<div class="a" style="left:362px;top:246px;width:1px;height:20px;background:#dcdcdc;"></div>
<div class="a" style="left:362px;top:266px;width:1px;height:148px;background:#a0a0a0;"></div>
<div class="a" style="left:426px;top:246px;width:1px;height:20px;background:#dcdcdc;"></div>
<div class="a" style="left:426px;top:266px;width:1px;height:148px;background:#a0a0a0;"></div>
<div class="a" style="left:490px;top:246px;width:1px;height:20px;background:#dcdcdc;"></div>
<div class="a" style="left:490px;top:266px;width:1px;height:148px;background:#a0a0a0;"></div>
<div class="a" style="left:554px;top:246px;width:1px;height:20px;background:#dcdcdc;"></div>
<div class="a" style="left:554px;top:266px;width:1px;height:148px;background:#a0a0a0;"></div>
<div class="a" style="left:618px;top:246px;width:1px;height:20px;background:#dcdcdc;"></div>
<div class="a" style="left:618px;top:266px;width:1px;height:148px;background:#a0a0a0;"></div>
<div class="a" style="left:682px;top:246px;width:1px;height:20px;background:#dcdcdc;"></div>
<div class="a" style="left:682px;top:266px;width:1px;height:148px;background:#a0a0a0;"></div>
<div class="a" style="left:235px;top:284px;width:489px;height:1px;background:#a0a0a0;"></div>
<div class="a" style="left:235px;top:303px;width:489px;height:1px;background:#a0a0a0;"></div>
<div class="a" style="left:235px;top:322px;width:489px;height:1px;background:#a0a0a0;"></div>
<div class="a" style="left:235px;top:341px;width:489px;height:1px;background:#a0a0a0;"></div>
<div class="a" style="left:235px;top:360px;width:489px;height:1px;background:#a0a0a0;"></div>
<div class="a" style="left:235px;top:379px;width:489px;height:1px;background:#a0a0a0;"></div>
<div class="a" style="left:235px;top:398px;width:489px;height:1px;background:#a0a0a0;"></div>
<div class="a" style="left:235px;top:246px;width:63px;height:19px;overflow:hidden"><div class="a g" style="left:0;top:0;width:63px;height:19px;text-align:center;line-height:21px">A</div></div>
<div class="a" style="left:237.8px;top:267.97px;width:59.19999999999999px;height:17px;overflow:hidden"><span id="t38" class="t k" style="left:0;top:2px;font-size:10.67px;">film_id</span></div>
<div class="a" style="left:299px;top:246px;width:63px;height:19px;overflow:hidden"><div class="a g" style="left:0;top:0;width:63px;height:19px;text-align:center;line-height:21px">B</div></div>
<div class="a" style="left:301.2px;top:267.97px;width:59.80000000000001px;height:17px;overflow:hidden"><span id="t39" class="t k" style="left:0;top:2px;font-size:10.67px;">title</span></div>
<div class="a" style="left:363px;top:246px;width:63px;height:19px;overflow:hidden"><div class="a g" style="left:0;top:0;width:63px;height:19px;text-align:center;line-height:21px">C</div></div>
<div class="a" style="left:365.2px;top:267.97px;width:59.80000000000001px;height:17px;overflow:hidden"><span id="t40" class="t k" style="left:0;top:2px;font-size:10.67px;">description</span></div>
<div class="a" style="left:427px;top:246px;width:63px;height:19px;overflow:hidden"><div class="a g" style="left:0;top:0;width:63px;height:19px;text-align:center;line-height:21px">D</div></div>
<div class="a" style="left:429.2px;top:267.97px;width:59.80000000000001px;height:17px;overflow:hidden"><span id="t41" class="t k" style="left:0;top:2px;font-size:10.67px;letter-spacing:0.158px;">release_year</span></div>
<div class="a" style="left:491px;top:246px;width:63px;height:19px;overflow:hidden"><div class="a g" style="left:0;top:0;width:63px;height:19px;text-align:center;line-height:21px">E</div></div>
<div class="a" style="left:493.2px;top:267.97px;width:59.80000000000001px;height:17px;overflow:hidden"><span id="t42" class="t k" style="left:0;top:2px;font-size:10.67px;">language_id</span></div>
<div class="a" style="left:555px;top:246px;width:63px;height:19px;overflow:hidden"><div class="a g" style="left:0;top:0;width:63px;height:19px;text-align:center;line-height:21px">F</div></div>
<div class="a" style="left:557.2px;top:267.97px;width:59.799999999999955px;height:17px;overflow:hidden"><span id="t43" class="t k" style="left:0;top:2px;font-size:10.67px;">original_language_id</span></div>
<div class="a" style="left:619px;top:246px;width:63px;height:19px;overflow:hidden"><div class="a g" style="left:0;top:0;width:63px;height:19px;text-align:center;line-height:21px">G</div></div>
<div class="a" style="left:621.2px;top:267.97px;width:59.799999999999955px;height:17px;overflow:hidden"><span id="t44" class="t k" style="left:0;top:2px;font-size:10.67px;letter-spacing:0.160px;">rental_duration</span></div>
<div class="a" style="left:683px;top:246px;width:41px;height:19px;overflow:hidden"><div class="a g" style="left:0;top:0;width:63px;height:19px;text-align:center;line-height:21px">H</div></div>
<div class="a" style="left:685.2px;top:267.97px;width:38.799999999999955px;height:17px;overflow:hidden"><span id="t45" class="t k" style="left:0;top:2px;font-size:10.67px;">rental_rate</span></div>
<svg class="a" style="left:0;top:0" width="742" height="466"><rect x="219.90" y="271.00" width="1.15" height="8.0" fill="#000"/><path d="M218.15 273.90L220.40 271.30" stroke="#000" stroke-width="1.05" fill="none"/></svg>
<div class="a g" style="left:205px;top:284px;width:29px;height:19px;text-align:center;line-height:21px">2</div>
<div class="a g" style="left:205px;top:303px;width:29px;height:19px;text-align:center;line-height:21px">3</div>
<div class="a g" style="left:205px;top:322px;width:29px;height:19px;text-align:center;line-height:21px">4</div>
<div class="a g" style="left:205px;top:341px;width:29px;height:19px;text-align:center;line-height:21px">5</div>
<div class="a g" style="left:205px;top:360px;width:29px;height:19px;text-align:center;line-height:21px">6</div>
<div class="a g" style="left:205px;top:379px;width:29px;height:19px;text-align:center;line-height:21px">7</div>
<div class="a g" style="left:205px;top:398px;width:29px;height:19px;text-align:center;line-height:21px">8</div>
<div class="a" style="left:235px;top:285px;width:63px;height:18px;overflow:hidden">
<svg class="a" style="left:0;top:0" width="63" height="19"><rect x="5.0" y="5" width="1.15" height="8" fill="#000"/><path d="M3.25 7.9L5.5 5.3" stroke="#000" stroke-width="1.05" fill="none"/></svg>
</div>
<div class="a" style="left:301.4px;top:286.97px;width:58.60000000000002px;height:17px;overflow:hidden"><span id="t46" class="t k" style="left:0;top:2px;font-size:10.67px;letter-spacing:-0.229px;">ACADEMY DINOSAUR</span></div>
<div class="a" style="left:363px;top:285px;width:63px;height:18px;background:#0078d7;"></div>
<div class="a" style="left:365.4px;top:286.97px;width:58.60000000000002px;height:17px;overflow:hidden"><span id="t47" class="t k" style="left:0;top:2px;font-size:10.67px;color:#fff;letter-spacing:-0.092px;">A Epic Drama of a Feminist</span></div>
<div class="a" style="left:429.4px;top:286.97px;width:58.60000000000002px;height:17px;overflow:hidden"><span id="t48" class="t k" style="left:0;top:2px;font-size:10.67px;">2006</span></div>
<div class="a" style="left:491px;top:285px;width:63px;height:18px;overflow:hidden">
<svg class="a" style="left:0;top:0" width="63" height="19"><rect x="5.0" y="5" width="1.15" height="8" fill="#000"/><path d="M3.25 7.9L5.5 5.3" stroke="#000" stroke-width="1.05" fill="none"/></svg>
</div>
<div class="a" style="left:557.4px;top:286.97px;width:58.60000000000002px;height:17px;overflow:hidden"><span id="t49" class="t k" style="left:0;top:2px;font-size:10.67px;">null</span></div>
<div class="a" style="left:621.4px;top:286.97px;width:58.60000000000002px;height:17px;overflow:hidden"><span id="t50" class="t k" style="left:0;top:2px;font-size:10.67px;">6</span></div>
<div class="a" style="left:685.4px;top:286.97px;width:38.60000000000002px;height:17px;overflow:hidden"><span id="t51" class="t k" style="left:0;top:2px;font-size:10.67px;">0,99</span></div>
<div class="a" style="left:237.4px;top:305.97px;width:58.599999999999994px;height:17px;overflow:hidden"><span id="t52" class="t k" style="left:0;top:2px;font-size:10.67px;">2</span></div>
<div class="a" style="left:301.4px;top:305.97px;width:58.60000000000002px;height:17px;overflow:hidden"><span id="t53" class="t k" style="left:0;top:2px;font-size:10.67px;letter-spacing:-0.366px;">ACE GOLDFINGER</span></div>
<div class="a" style="left:363px;top:304px;width:63px;height:18px;background:#0078d7;"></div>
<div class="a" style="left:365.4px;top:305.97px;width:58.60000000000002px;height:17px;overflow:hidden"><span id="t54" class="t k" style="left:0;top:2px;font-size:10.67px;color:#fff;letter-spacing:0.166px;">A Astounding Epistle of a</span></div>
<div class="a" style="left:429.4px;top:305.97px;width:58.60000000000002px;height:17px;overflow:hidden"><span id="t55" class="t k" style="left:0;top:2px;font-size:10.67px;">2006</span></div>
<div class="a" style="left:491px;top:304px;width:63px;height:18px;overflow:hidden">
<svg class="a" style="left:0;top:0" width="63" height="19"><rect x="5.0" y="5" width="1.15" height="8" fill="#000"/><path d="M3.25 7.9L5.5 5.3" stroke="#000" stroke-width="1.05" fill="none"/></svg>
</div>
<div class="a" style="left:557.4px;top:305.97px;width:58.60000000000002px;height:17px;overflow:hidden"><span id="t56" class="t k" style="left:0;top:2px;font-size:10.67px;">null</span></div>
<div class="a" style="left:621.4px;top:305.97px;width:58.60000000000002px;height:17px;overflow:hidden"><span id="t57" class="t k" style="left:0;top:2px;font-size:10.67px;">3</span></div>
<div class="a" style="left:685.4px;top:305.97px;width:38.60000000000002px;height:17px;overflow:hidden"><span id="t58" class="t k" style="left:0;top:2px;font-size:10.67px;">4,99</span></div>
<div class="a" style="left:237.4px;top:324.97px;width:58.599999999999994px;height:17px;overflow:hidden"><span id="t59" class="t k" style="left:0;top:2px;font-size:10.67px;">3</span></div>
<div class="a" style="left:301.4px;top:324.97px;width:58.60000000000002px;height:17px;overflow:hidden"><span id="t60" class="t k" style="left:0;top:2px;font-size:10.67px;letter-spacing:-0.290px;">ADAPTATION HOLES</span></div>
<div class="a" style="left:363px;top:323px;width:63px;height:18px;background:#0078d7;"></div>
<div class="a" style="left:365.4px;top:324.97px;width:58.60000000000002px;height:17px;overflow:hidden"><span id="t61" class="t k" style="left:0;top:2px;font-size:10.67px;color:#fff;letter-spacing:0.166px;">A Astounding Reflection</span></div>
<div class="a" style="left:429.4px;top:324.97px;width:58.60000000000002px;height:17px;overflow:hidden"><span id="t62" class="t k" style="left:0;top:2px;font-size:10.67px;">2006</span></div>
<div class="a" style="left:491px;top:323px;width:63px;height:18px;overflow:hidden">
<svg class="a" style="left:0;top:0" width="63" height="19"><rect x="5.0" y="5" width="1.15" height="8" fill="#000"/><path d="M3.25 7.9L5.5 5.3" stroke="#000" stroke-width="1.05" fill="none"/></svg>
</div>
<div class="a" style="left:557.4px;top:324.97px;width:58.60000000000002px;height:17px;overflow:hidden"><span id="t63" class="t k" style="left:0;top:2px;font-size:10.67px;">null</span></div>
<div class="a" style="left:621.4px;top:324.97px;width:58.60000000000002px;height:17px;overflow:hidden"><span id="t64" class="t k" style="left:0;top:2px;font-size:10.67px;">7</span></div>
<div class="a" style="left:685.4px;top:324.97px;width:38.60000000000002px;height:17px;overflow:hidden"><span id="t65" class="t k" style="left:0;top:2px;font-size:10.67px;">2,99</span></div>
<div class="a" style="left:237.4px;top:343.97px;width:58.599999999999994px;height:17px;overflow:hidden"><span id="t66" class="t k" style="left:0;top:2px;font-size:10.67px;">4</span></div>
<div class="a" style="left:301.4px;top:343.97px;width:58.60000000000002px;height:17px;overflow:hidden"><span id="t67" class="t k" style="left:0;top:2px;font-size:10.67px;letter-spacing:-0.467px;">AFFAIR PREJUDICE</span></div>
<div class="a" style="left:363px;top:342px;width:63px;height:18px;background:#0078d7;"></div>
<div class="a" style="left:365.4px;top:343.97px;width:58.60000000000002px;height:17px;overflow:hidden"><span id="t68" class="t k" style="left:0;top:2px;font-size:10.67px;color:#fff;letter-spacing:0.004px;">A Fanciful Documentary</span></div>
<div class="a" style="left:429.4px;top:343.97px;width:58.60000000000002px;height:17px;overflow:hidden"><span id="t69" class="t k" style="left:0;top:2px;font-size:10.67px;">2006</span></div>
<div class="a" style="left:491px;top:342px;width:63px;height:18px;overflow:hidden">
<svg class="a" style="left:0;top:0" width="63" height="19"><rect x="5.0" y="5" width="1.15" height="8" fill="#000"/><path d="M3.25 7.9L5.5 5.3" stroke="#000" stroke-width="1.05" fill="none"/></svg>
</div>
<div class="a" style="left:557.4px;top:343.97px;width:58.60000000000002px;height:17px;overflow:hidden"><span id="t70" class="t k" style="left:0;top:2px;font-size:10.67px;">null</span></div>
<div class="a" style="left:621.4px;top:343.97px;width:58.60000000000002px;height:17px;overflow:hidden"><span id="t71" class="t k" style="left:0;top:2px;font-size:10.67px;">5</span></div>
<div class="a" style="left:685.4px;top:343.97px;width:38.60000000000002px;height:17px;overflow:hidden"><span id="t72" class="t k" style="left:0;top:2px;font-size:10.67px;">2,99</span></div>
<div class="a" style="left:237.4px;top:362.97px;width:58.599999999999994px;height:17px;overflow:hidden"><span id="t73" class="t k" style="left:0;top:2px;font-size:10.67px;">5</span></div>
<div class="a" style="left:301.4px;top:362.97px;width:58.60000000000002px;height:17px;overflow:hidden"><span id="t74" class="t k" style="left:0;top:2px;font-size:10.67px;letter-spacing:-0.438px;">AFRICAN EGG</span></div>
<div class="a" style="left:363px;top:361px;width:63px;height:18px;background:#0078d7;"></div>
<div class="a" style="left:365.4px;top:362.97px;width:58.60000000000002px;height:17px;overflow:hidden"><span id="t75" class="t k" style="left:0;top:2px;font-size:10.67px;color:#fff;letter-spacing:0.014px;">A Fast-Paced Documentary</span></div>
<div class="a" style="left:429.4px;top:362.97px;width:58.60000000000002px;height:17px;overflow:hidden"><span id="t76" class="t k" style="left:0;top:2px;font-size:10.67px;">2006</span></div>
<div class="a" style="left:491px;top:361px;width:63px;height:18px;overflow:hidden">
<svg class="a" style="left:0;top:0" width="63" height="19"><rect x="5.0" y="5" width="1.15" height="8" fill="#000"/><path d="M3.25 7.9L5.5 5.3" stroke="#000" stroke-width="1.05" fill="none"/></svg>
</div>
<div class="a" style="left:557.4px;top:362.97px;width:58.60000000000002px;height:17px;overflow:hidden"><span id="t77" class="t k" style="left:0;top:2px;font-size:10.67px;">null</span></div>
<div class="a" style="left:621.4px;top:362.97px;width:58.60000000000002px;height:17px;overflow:hidden"><span id="t78" class="t k" style="left:0;top:2px;font-size:10.67px;">6</span></div>
<div class="a" style="left:685.4px;top:362.97px;width:38.60000000000002px;height:17px;overflow:hidden"><span id="t79" class="t k" style="left:0;top:2px;font-size:10.67px;">2,99</span></div>
<div class="a" style="left:237.4px;top:381.97px;width:58.599999999999994px;height:17px;overflow:hidden"><span id="t80" class="t k" style="left:0;top:2px;font-size:10.67px;">6</span></div>
<div class="a" style="left:301.4px;top:381.97px;width:58.60000000000002px;height:17px;overflow:hidden"><span id="t81" class="t k" style="left:0;top:2px;font-size:10.67px;letter-spacing:-0.553px;">AGENT TRUMAN</span></div>
<div class="a" style="left:363px;top:380px;width:63px;height:18px;background:#0078d7;"></div>
<div class="a" style="left:365.4px;top:381.97px;width:58.60000000000002px;height:17px;overflow:hidden"><span id="t82" class="t k" style="left:0;top:2px;font-size:10.67px;color:#fff;letter-spacing:0.009px;">A Intrepid Panorama of</span></div>
<div class="a" style="left:429.4px;top:381.97px;width:58.60000000000002px;height:17px;overflow:hidden"><span id="t83" class="t k" style="left:0;top:2px;font-size:10.67px;">2006</span></div>
<div class="a" style="left:491px;top:380px;width:63px;height:18px;overflow:hidden">
<svg class="a" style="left:0;top:0" width="63" height="19"><rect x="5.0" y="5" width="1.15" height="8" fill="#000"/><path d="M3.25 7.9L5.5 5.3" stroke="#000" stroke-width="1.05" fill="none"/></svg>
</div>
<div class="a" style="left:557.4px;top:381.97px;width:58.60000000000002px;height:17px;overflow:hidden"><span id="t84" class="t k" style="left:0;top:2px;font-size:10.67px;">null</span></div>
<div class="a" style="left:621.4px;top:381.97px;width:58.60000000000002px;height:17px;overflow:hidden"><span id="t85" class="t k" style="left:0;top:2px;font-size:10.67px;">3</span></div>
<div class="a" style="left:685.4px;top:381.97px;width:38.60000000000002px;height:17px;overflow:hidden"><span id="t86" class="t k" style="left:0;top:2px;font-size:10.67px;">2,99</span></div>
<div class="a" style="left:237.4px;top:400.97px;width:58.599999999999994px;height:17px;overflow:hidden"><span id="t87" class="t k" style="left:0;top:2px;font-size:10.67px;">7</span></div>
<div class="a" style="left:301.4px;top:400.97px;width:58.60000000000002px;height:17px;overflow:hidden"><span id="t88" class="t k" style="left:0;top:2px;font-size:10.67px;letter-spacing:-0.265px;">AIRPLANE SIERRA</span></div>
<div class="a" style="left:363px;top:399px;width:63px;height:15px;background:#0078d7;"></div>
<div class="a" style="left:365.4px;top:400.97px;width:58.60000000000002px;height:17px;overflow:hidden"><span id="t89" class="t k" style="left:0;top:2px;font-size:10.67px;color:#fff;letter-spacing:0.119px;">A Touching Saga of a</span></div>
<div class="a" style="left:429.4px;top:400.97px;width:58.60000000000002px;height:17px;overflow:hidden"><span id="t90" class="t k" style="left:0;top:2px;font-size:10.67px;">2006</span></div>
<div class="a" style="left:491px;top:399px;width:63px;height:15px;overflow:hidden">
<svg class="a" style="left:0;top:0" width="63" height="19"><rect x="5.0" y="5" width="1.15" height="8" fill="#000"/><path d="M3.25 7.9L5.5 5.3" stroke="#000" stroke-width="1.05" fill="none"/></svg>
</div>
<div class="a" style="left:557.4px;top:400.97px;width:58.60000000000002px;height:17px;overflow:hidden"><span id="t91" class="t k" style="left:0;top:2px;font-size:10.67px;">null</span></div>
<div class="a" style="left:621.4px;top:400.97px;width:58.60000000000002px;height:17px;overflow:hidden"><span id="t92" class="t k" style="left:0;top:2px;font-size:10.67px;">6</span></div>
<div class="a" style="left:685.4px;top:400.97px;width:38.60000000000002px;height:17px;overflow:hidden"><span id="t93" class="t k" style="left:0;top:2px;font-size:10.67px;">4,99</span></div>
<div class="a" style="left:205px;top:414px;width:536px;height:16px;background:#f0f0f0;"></div>
<div class="a" style="left:725px;top:246px;width:16px;height:168px;background:#f0f0f0;"></div>
<div class="a" style="left:222px;top:414px;width:286px;height:15px;background:#cdcdcd;"></div>
<div class="a" style="left:725px;top:263px;width:15px;height:16px;background:#cdcdcd;"></div>
<svg class="a" style="left:0;top:0" width="742" height="466"><path d="M729.50 257.20L732.50 253.20L735.50 257.20" fill="none" stroke="#484848" stroke-width="2.1" stroke-linejoin="miter"/></svg>
<svg class="a" style="left:0;top:0" width="742" height="466"><path d="M729.50 402.80L732.50 406.80L735.50 402.80" fill="none" stroke="#484848" stroke-width="2.1" stroke-linejoin="miter"/></svg>
<svg class="a" style="left:0;top:0" width="742" height="466"><path d="M215.20 418.20L211.20 421.50L215.20 424.80" fill="none" stroke="#484848" stroke-width="2.1" stroke-linejoin="miter"/></svg>
<svg class="a" style="left:0;top:0" width="742" height="466"><path d="M713.80 418.20L717.80 421.50L713.80 424.80" fill="none" stroke="#484848" stroke-width="2.1" stroke-linejoin="miter"/></svg>
<span id="t94" class="t" style="left:206.96px;top:434.84px;font-size:12px;transform:scaleX(0.9774);">To select the column click its header. To select the row click its number. To select several cells at once</span>
<span id="t95" class="t" style="left:206.69px;top:449.84px;font-size:12px;transform:scaleX(1.0146);">click the right cell and the last cell holding the "Shift" button.</span>
</body></html>
